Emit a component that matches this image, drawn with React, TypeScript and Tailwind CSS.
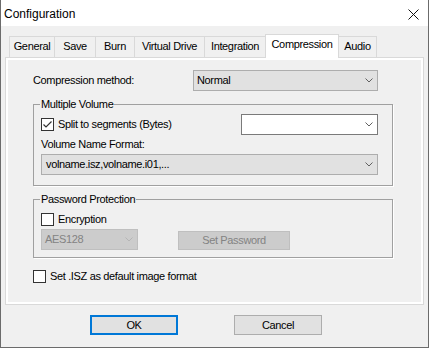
const font = "font-['Liberation_Sans',Arial,sans-serif]";

const Chevron = ({ color = '#606060' }: { color?: string }) => (
  <svg width="8" height="5" viewBox="0 0 8 5" className="mr-[4px] shrink-0">
    <path d="M0.5 0.5 L4 4 L7.5 0.5" fill="none" stroke={color} strokeWidth="1" />
  </svg>
);

const Check = ({ checked = false }: { checked?: boolean }) => (
  <div className="w-[13px] h-[13px] border border-[#333333] bg-white shrink-0 flex items-center justify-center">
    {checked && (
      <svg width="11" height="11" viewBox="0 0 11 11">
        <path d="M1.5 5.5 L4 8 L9.5 2.5" fill="none" stroke="#333333" strokeWidth="1.2" />
      </svg>
    )}
  </div>
);

const tabs = [
  { label: 'General', w: 'w-[46px]' },
  { label: 'Save', w: 'w-[42px]' },
  { label: 'Burn', w: 'w-[40px]' },
  { label: 'Virtual Drive', w: 'w-[71px]' },
  { label: 'Integration', w: 'w-[62px]' },
  { label: 'Compression', w: 'w-[74px]', active: true },
  { label: 'Audio', w: 'w-[39px]' },
];

const App = () => {
  return (
    <div className={`${font} w-[429px] h-[348px] bg-[#f0f0f0] border-x border-b border-[#6b6b6b] text-[11px] tracking-[-0.35px] text-black flex flex-col`}>
      {/* title bar */}
      <div className="h-[26px] bg-white flex items-center justify-between pl-[3px] pr-[9px] shrink-0">
        <span className="text-[12px] tracking-normal mt-[1px]">Configuration</span>
        <svg width="11" height="11" viewBox="0 0 11 11" className="mt-[2px]">
          <path d="M0.5 0.5 L10.5 10.5 M10.5 0.5 L0.5 10.5" stroke="#111" strokeWidth="1" />
        </svg>
      </div>

      {/* tabs */}
      <div className="flex items-end ml-[8px] mt-[8px] h-[23px]">
        {tabs.map((t, i) =>
          t.active ? (
            <div
              key={t.label}
              className={`${t.w} h-[24px] -mb-px -ml-px relative z-10 bg-white border-x border-t border-[#d9d9d9] flex justify-center pt-[3px] leading-[13px]`}
            >
              {t.label}
            </div>
          ) : (
            <div
              key={t.label}
              className={`${t.w} h-[21px] ${i > 0 ? '-ml-px' : ''} bg-[#f0f0f0] border-x border-t border-[#d9d9d9] flex justify-center pt-[3px] leading-[13px]`}
            >
              {t.label}
            </div>
          )
        )}
      </div>

      {/* panel */}
      <div className="mx-[4px] h-[248px] border border-[#d9d9d9] shrink-0">
        <div className="h-full border-2 border-white flex flex-col pl-[25px] pt-[10px]">
          <div className="flex items-center h-[21px]">
            <span className="w-[160px]">Compression method:</span>
            <div className="w-[185px] h-[21px] bg-[#e1e1e1] border border-[#adadad] flex items-center justify-between pl-[3px]">
              <span>Normal</span>
              <Chevron />
            </div>
          </div>

          {/* Multiple Volume */}
          <div className="relative mt-[13px] w-[360px] h-[82px] border border-[#a0a0a0] shadow-[1px_1px_0_#ffffff] pl-[7px] pt-[9px]">
            <span className="absolute -top-[7px] left-[6px] bg-[#f0f0f0] px-px leading-[13px]">Multiple Volume</span>
            <div className="flex items-center h-[21px]">
              <div className="flex items-center gap-[4px] w-[200px]">
                <Check checked />
                <span>Split to segments (Bytes)</span>
              </div>
              <div className="w-[137px] h-[21px] bg-white border border-[#7a7a7a] flex items-center justify-end">
                <Chevron />
              </div>
            </div>
            <div className="h-[19px] flex items-center">Volume Name Format:</div>
            <div className="w-[337px] h-[21px] bg-[#e1e1e1] border border-[#adadad] flex items-center justify-between pl-[4px]">
              <span>volname.isz,volname.i01,...</span>
              <Chevron />
            </div>
          </div>

          {/* Password Protection */}
          <div className="relative mt-[13px] w-[360px] h-[59px] border border-[#a0a0a0] shadow-[1px_1px_0_#ffffff] pl-[7px] pt-[12px]">
            <span className="absolute -top-[7px] left-[6px] bg-[#f0f0f0] px-px leading-[13px]">Password Protection</span>
            <div className="flex items-center gap-[4px] h-[15px]">
              <Check />
              <span>Encryption</span>
            </div>
            <div className="flex items-center mt-[2px] h-[21px]">
              <div className="w-[97px] h-[21px] bg-[#cccccc] border border-[#bfbfbf] flex items-center justify-between pl-[3px] text-[#838383]">
                <span>AES128</span>
                <Chevron color="#b5b5b5" />
              </div>
              <div className="ml-[40px] w-[112px] h-[19px] mt-[2px] bg-[#cccccc] border border-[#bfbfbf] flex items-center justify-center text-[#838383]">
                Set Password
              </div>
            </div>
          </div>

          <div className="flex items-center gap-[4px] h-[15px] mt-[11px]">
            <Check />
            <span>Set .ISZ as default image format</span>
          </div>
        </div>
      </div>

      {/* buttons */}
      <div className="flex pl-[89px] gap-[56px] mt-[10px]">
        <div className="w-[88px] h-[20px] bg-[#e1e1e1] border-2 border-[#0078d7] flex items-center justify-center">OK</div>
        <div className="w-[88px] h-[20px] bg-[#e1e1e1] border border-[#adadad] flex items-center justify-center">Cancel</div>
      </div>
    </div>
  );
};

export default App;
